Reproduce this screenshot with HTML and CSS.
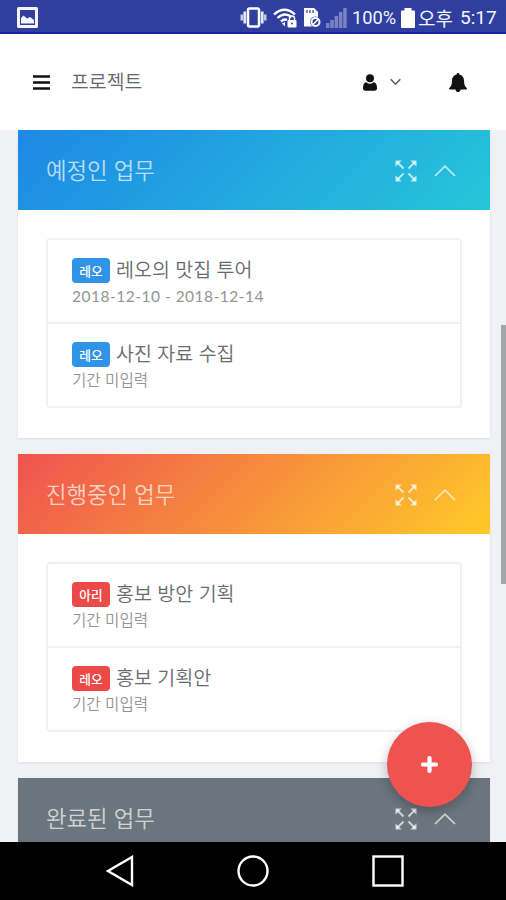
FILE: index.html
```html
<!DOCTYPE html>
<html lang="ko">
<head>
    <meta charset="UTF-8">
    <meta name="viewport" content="width=device-width, initial-scale=1.0">
    <title>프로젝트</title>
    <link rel="stylesheet" href="styles.css">
</head>
<body>

<svg class="defs" width="0" height="0">
    <symbol id="expand" viewBox="0 0 22 22">
        <path d="M2 2l6.500 6.500M20 2l-6.500 6.500M2 20l6.500-6.500M20 20l-6.500-6.500" fill="none" stroke="currentColor" stroke-width="1.900"/>
        <path d="M.5.5h6.200L.5 6.700zM21.500.5h-6.200l6.200 6.200zM.5 21.500h6.200L.5 15.300zM21.500 21.500h-6.200l6.200-6.200z" fill="currentColor"/>
    </symbol>
    <symbol id="up" viewBox="0 0 22 12">
        <path d="M1 11L11 1.200 21 11" fill="none" stroke="currentColor" stroke-width="1.700"/>
    </symbol>
</svg>

<div class="statusbar">
    <svg class="picture" width="21" height="21" viewBox="0 0 21 21">
        <path fill="#f2f4ff" fill-rule="evenodd" d="M1.500 0h18A1.500 1.500 0 0 1 21 1.500v18a1.500 1.500 0 0 1-1.500 1.500h-18A1.500 1.500 0 0 1 0 19.500v-18A1.500 1.500 0 0 1 1.500 0zM3 3v15h15V3z"/>
        <path fill="#f2f4ff" d="M4 16.500V11l2.500-2.500 3.500 3 3-1.500 4 3v3.500z"/>
    </svg>
    <div class="status-icons">
        <svg width="27" height="21" viewBox="0 0 27 21">
            <rect x="8" y="1.500" width="11" height="18" rx="1.500" fill="none" stroke="#fff" stroke-width="2.500"/>
            <path d="M4.800 4.500v12M22.200 4.500v12" stroke="#e3e6f6" stroke-width="2.800"/>
            <path d="M1.800 7.500v6M25.200 7.500v6" stroke="#c5cae9" stroke-width="2.600"/>
        </svg>
        <svg class="wifi" width="24" height="20" viewBox="0 0 24 20">
            <g fill="none" stroke="#fff" stroke-width="2.300">
                <path d="M1 6.500Q11.500-3 22 6.500"/>
                <path d="M4.500 10Q11.500 3.500 18.500 9"/>
                <path d="M8 13.500Q11 10.500 14 12"/>
            </g>
            <path d="M9 15.500l3-1.500v4.500z" fill="#fff"/>
            <rect x="14.500" y="12" width="9" height="7.500" rx="1" fill="#fff"/>
            <path d="M16.500 12v-1.500a2.500 2.500 0 0 1 5 0V12" fill="none" stroke="#fff" stroke-width="1.500"/>
            <circle cx="19" cy="15.500" r="1" fill="#303f9f"/>
        </svg>
        <svg class="sdcard" width="18" height="21" viewBox="0 0 18 21">
            <path d="M1 1h10l4 4v14.500H1z" fill="#fff"/>
            <path d="M4 3v3M7 3v3M10 3v3" stroke="#303f9f" stroke-width="1.200"/>
            <circle cx="12.500" cy="15" r="5.500" fill="#303f9f"/>
            <circle cx="12.500" cy="15" r="4" fill="none" stroke="#fff" stroke-width="2"/>
            <path d="M10 17.500l5-5" stroke="#fff" stroke-width="1.600"/>
        </svg>
        <svg class="signal" width="21" height="20" viewBox="0 0 21 20">
            <path fill="#7883c3" d="M0 15h3.500v5H0zM4.300 12h3.500v8H4.300zM8.600 8h3.500v12H8.600zM12.900 4h3.500v16h-3.500zM17.200 0h3.500v20h-3.500z"/>
        </svg>
        <span class="percent">100%</span>
        <svg class="battery" width="14" height="20" viewBox="0 0 14 20">
            <path fill="#fff" d="M3.500 0h7v2.500H13a1 1 0 0 1 1 1V19a1 1 0 0 1-1 1H1a1 1 0 0 1-1-1V3.500a1 1 0 0 1 1-1h2.500z"/>
        </svg>
        <span class="ampm">오후</span>
        <span class="clock">5:17</span>
    </div>
</div>

<div class="topbar">
    <svg class="menu" width="17" height="15" viewBox="0 0 17 15">
        <path d="M0 1.500h17M0 7.500h17M0 13.500h17" stroke="#111" stroke-width="2.300"/>
    </svg>
    <h1>프로젝트</h1>
    <svg class="user" width="14" height="17" viewBox="0 0 14 17">
        <circle cx="7" cy="4.300" r="4" fill="#111"/>
        <path fill="#111" d="M3.300 8.200a5.800 5.800 0 0 0 7.400 0C13 8.500 14 10.500 14 14a2.600 2.600 0 0 1-2.500 2.800h-9A2.600 2.600 0 0 1 0 14c0-3.500 1-5.500 3.300-5.800z"/>
    </svg>
    <svg class="caret" width="11" height="8" viewBox="0 0 11 8">
        <path d="M.7 1.200l4.800 5 4.800-5" fill="none" stroke="#555" stroke-width="1.400"/>
    </svg>
    <svg class="bell" width="18" height="19" viewBox="0 0 18 19">
        <path fill="#111" d="M9 0a1.300 1.300 0 0 1 1.300 1.500C13.500 2.200 15 4.600 15 7.500c0 4 1 6.300 3 7.800 0 .9-.6 1.300-1.300 1.300h-5.200a2.500 2.500 0 0 1-5 0H1.300C.6 16.600 0 16.200 0 15.300c2-1.500 3-3.800 3-7.800 0-2.900 1.500-5.300 4.700-6A1.300 1.300 0 0 1 9 0z"/>
    </svg>
</div>

<div class="content">
    <div class="card">
        <div class="card-header blue">
            <h2>예정인 업무</h2>
            <svg class="expand"><use href="#expand"/></svg>
            <svg class="up"><use href="#up"/></svg>
        </div>
        <div class="card-body">
            <div class="list">
                <div class="task">
                    <div class="task-title"><span class="badge badge-blue">레오</span><span class="name">레오의 맛집 투어</span></div>
                    <div class="period date">2018-12-10 - 2018-12-14</div>
                </div>
                <div class="task">
                    <div class="task-title"><span class="badge badge-blue">레오</span><span class="name">사진 자료 수집</span></div>
                    <div class="period">기간 미입력</div>
                </div>
            </div>
        </div>
    </div>

    <div class="card">
        <div class="card-header orange">
            <h2>진행중인 업무</h2>
            <svg class="expand"><use href="#expand"/></svg>
            <svg class="up"><use href="#up"/></svg>
        </div>
        <div class="card-body">
            <div class="list">
                <div class="task">
                    <div class="task-title"><span class="badge badge-red">아리</span><span class="name">홍보 방안 기획</span></div>
                    <div class="period">기간 미입력</div>
                </div>
                <div class="task">
                    <div class="task-title"><span class="badge badge-red">레오</span><span class="name">홍보 기획안</span></div>
                    <div class="period">기간 미입력</div>
                </div>
            </div>
        </div>
    </div>

    <div class="card">
        <div class="card-header gray">
            <h2>완료된 업무</h2>
            <svg class="expand"><use href="#expand"/></svg>
            <svg class="up"><use href="#up"/></svg>
        </div>
    </div>

    <div class="scrollbar"></div>
    <div class="fab">
        <svg width="17" height="17" viewBox="0 0 17 17">
            <path d="M8.500 2v13M2 8.500h13" stroke="#fff" stroke-width="4.200" stroke-linecap="round"/>
        </svg>
    </div>
</div>

<div class="navbar">
    <svg width="28" height="32" viewBox="0 0 28 32">
        <path d="M26 2v28L2 16z" fill="none" stroke="#fff" stroke-width="2.400"/>
    </svg>
    <svg width="32" height="32" viewBox="0 0 32 32">
        <circle cx="16" cy="16" r="14.500" fill="none" stroke="#fff" stroke-width="2.400"/>
    </svg>
    <svg width="32" height="32" viewBox="0 0 32 32">
        <rect x="1.500" y="1.500" width="29" height="29" fill="none" stroke="#fff" stroke-width="2.400"/>
    </svg>
</div>

</body>
</html>
```

FILE: styles.css
```css
* { box-sizing: border-box; }
body { margin: 0; height: 900px; display: flex; flex-direction: column; overflow: hidden; background: #eff1f5; font-family: "Noto Sans CJK KR", sans-serif; }
svg { display: block; flex: none; }
h1, h2 { margin: 0; font-weight: 350; }
.defs { position: absolute; }

.statusbar { height: 34px; flex: none; display: flex; align-items: center; justify-content: space-between; padding: 2px 9px 0 17px; background: #303f9f; border-bottom: 2px solid #1722a0; color: #f4f5ff; }
.status-icons { display: flex; align-items: center; height: 32px; padding-top: 1px; white-space: nowrap; }
.wifi { margin-left: 6px; }
.sdcard { margin-left: 6px; }
.signal { margin-left: 5px; }
.percent { width: 46px; margin-left: 5px; font: 18.3px Roboto, sans-serif; }
.battery { margin-left: 3px; }
.ampm { width: 36px; margin-left: 3px; font-size: 19px; line-height: 30px; }
.clock { width: 37px; margin-left: 6px; font: 19px Roboto, sans-serif; }

.topbar { height: 96px; flex: none; display: flex; align-items: center; padding: 0 39px 0 33px; background: #fff; }
.topbar h1 { flex: 1; margin-left: 21px; padding-bottom: 2px; font-size: 19.4px; line-height: 28px; color: #666; }
.caret { margin-left: 13px; }
.bell { margin-left: 48px; }

.content { flex: 1; min-height: 0; position: relative; overflow: hidden; padding: 0 16px 0 18px; }
.card { margin-bottom: 16px; background: #fff; box-shadow: 0 1px 2px rgba(0, 0, 0, 0.08); }
.card-header { height: 80px; display: flex; align-items: center; padding: 1px 34px 0 28px; color: rgba(255, 255, 255, 0.7); }
.card-header h2 { flex: 1; padding-bottom: 3px; font-size: 22.3px; line-height: 32px; }
.blue { background: linear-gradient(135deg, #1e88e5, #26c6da); }
.orange { background: linear-gradient(135deg, #ef5350, #ffca28); }
.gray { background: #6b757d; }
.expand { width: 22px; height: 22px; }
.up { width: 22px; height: 12px; margin-left: 17px; }
.card-body { height: 228px; padding: 28px; }
.list { height: 170px; border: 2px solid #f0f1f3; border-radius: 4px; }
.task { height: 82px; padding: 17px 24px 0; }
.task + .task { height: 84px; border-top: 2px solid #f0f1f3; }
.task-title { display: flex; align-items: center; height: 28px; }
.name { padding-bottom: 5px; font-size: 19.5px; line-height: 28px; font-weight: 350; color: #666b70; white-space: nowrap; }
.badge { width: 38px; height: 25px; margin-right: 6px; margin-top: -1px; padding-top: 1px; border-radius: 4px; font-size: 12.7px; line-height: 24px; font-weight: 500; text-align: center; color: #fff; }
.badge-blue { background: #3093e8; }
.badge-red { background: #eb4a48; }
.period { margin-top: -2px; font-size: 15.6px; line-height: 24px; font-weight: 350; color: #949494; }
.date { padding-top: 1px; font-family: Lato, sans-serif; font-size: 15.5px; font-weight: 400; letter-spacing: 0.5px; }

.scrollbar { position: absolute; right: 0; top: 195px; width: 5px; height: 259px; background: #a4a5a8; }
.fab { position: absolute; left: 387px; top: 592px; width: 85px; height: 85px; display: flex; align-items: center; justify-content: center; border-radius: 50%; background: #ef5350; box-shadow: 0 4px 12px rgba(0, 0, 0, 0.25); }

.navbar { height: 58px; flex: none; display: flex; align-items: center; gap: 103px; padding-left: 106px; background: #000; }
```
